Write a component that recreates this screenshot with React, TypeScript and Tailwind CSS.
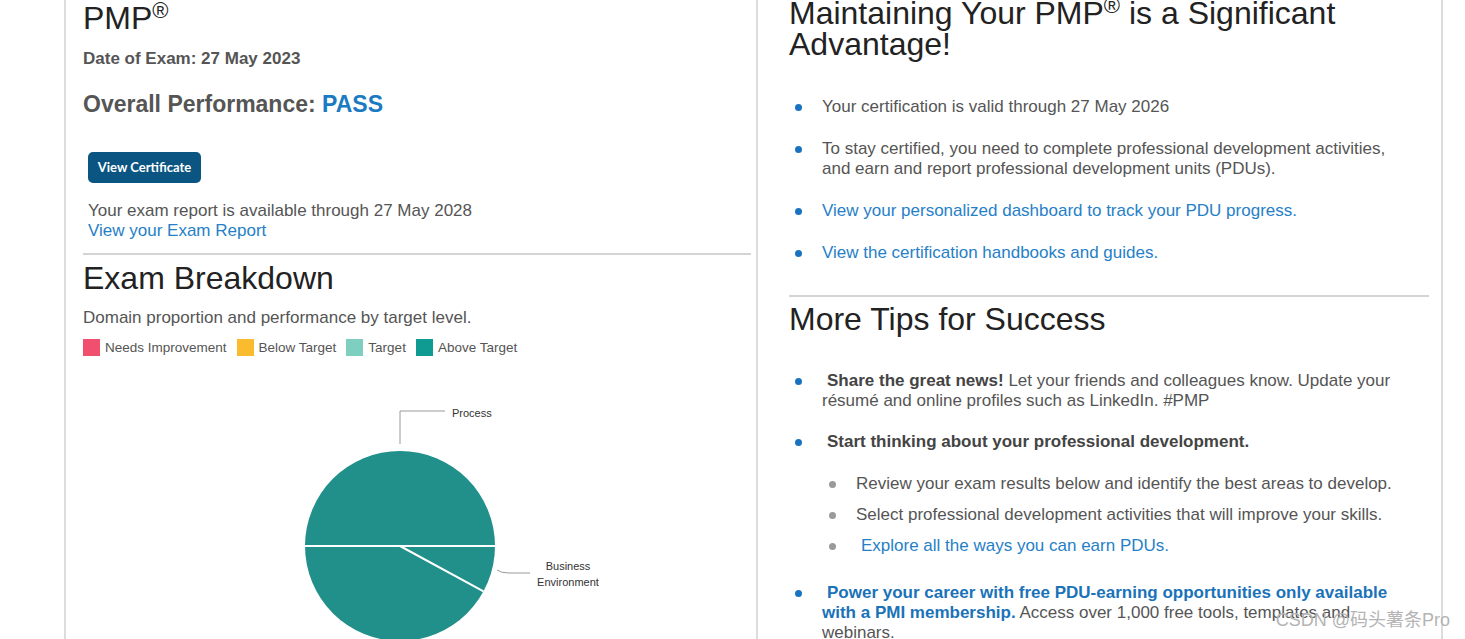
const Dot = ({ sub }: { sub?: boolean }) =>
  sub ? (
    <span className="mt-[7px] ml-[40px] mr-[20px] size-[7px] shrink-0 rounded-full bg-[#9a9a9a]" />
  ) : (
    <span className="mt-[7px] ml-[6px] mr-[20px] size-[7px] shrink-0 rounded-full bg-[#1a73c0]" />
  )

const Legend = ({ color, label }: { color: string; label: string }) => (
  <div className="flex items-center gap-[5px]">
    <span className={`size-[17px] ${color}`} />
    <span>{label}</span>
  </div>
)

const Pie = () => (
  <svg width="668" height="275" className="block" style={{ fontFamily: "Liberation Sans, Arial, sans-serif" }}>
    <circle cx="317" cy="180" r="95" fill="#218f8a" />
    <line x1="222" y1="180" x2="412" y2="180" stroke="#fff" strokeWidth="2" />
    <line x1="317" y1="180" x2="400.5" y2="225.3" stroke="#fff" strokeWidth="2" />
    <polyline points="317,78 317,45 362,45" fill="none" stroke="#9a9a9a" strokeWidth="1" />
    <text x="369" y="51" fontSize="11" fill="#333">Process</text>
    <path d="M414 204 Q418 207 426 207 L447 207" fill="none" stroke="#9a9a9a" strokeWidth="1" />
    <text x="485" y="204" fontSize="11" fill="#333" textAnchor="middle">Business</text>
    <text x="485" y="220" fontSize="11" fill="#333" textAnchor="middle">Environment</text>
  </svg>
)

export default function App() {
  return (
    <div className="relative h-[639px] w-[1465px] overflow-hidden bg-white font-['Liberation_Sans',Arial,sans-serif] text-[#555]">
      <div className="ml-[64px] flex h-full w-[1379px]">
        {/* left card */}
        <div className="w-[694px] shrink-0 border-x-2 border-[#dcdcdc] pl-[17px] pr-[5px]">
          <h1 className="mt-[1px] text-[32px] leading-[34px] text-[#222]">
            PMP<sup className="text-[22px]">®</sup>
          </h1>
          <p className="mt-[14px] text-[17px] font-bold leading-[20px]">Date of Exam: 27 May 2023</p>
          <p className="mt-[21px] text-[23px] font-bold leading-[28px]">
            Overall Performance: <span className="text-[#1a7ac2]">PASS</span>
          </p>
          <div className="ml-[5px]">
            <button className="mt-[34px] h-[31px] w-[113px] rounded-[5px] bg-[#0b5582] font-['Lato',sans-serif] text-[13px] font-bold text-white">
              View Certificate
            </button>
            <p className="mt-[18px] text-[17px] leading-[20px]">Your exam report is available through 27 May 2028</p>
            <p className="text-[17px] leading-[20px] text-[#2680c8]">View your Exam Report</p>
          </div>
          <div className="mt-[12px] h-[2px] bg-[#d4d4d4]" />
          <h2 className="mt-[6px] text-[32px] leading-[34px] text-[#222]">Exam Breakdown</h2>
          <p className="mt-[13px] text-[17px] leading-[20px]">Domain proportion and performance by target level.</p>
          <div className="mt-[11px] flex gap-[10px] text-[13.5px] leading-[17px]">
            <Legend color="bg-[#f0506e]" label="Needs Improvement" />
            <Legend color="bg-[#fbbb2f]" label="Below Target" />
            <Legend color="bg-[#7fcfc0]" label="Target" />
            <Legend color="bg-[#0f9a92]" label="Above Target" />
          </div>
          <div className="mt-[10px]">
            <Pie />
          </div>
        </div>

        {/* right card */}
        <div className="w-[685px] shrink-0 border-r-2 border-[#dcdcdc] pl-[31px] pr-[12px]">
          <h2 className="-mt-[2px] text-[32px] leading-[31px] text-[#222]">
            Maintaining Your PMP<sup className="text-[22px]">®</sup> is a Significant Advantage!
          </h2>
          <ul className="mt-[37px] flex flex-col gap-[22px] text-[17px] leading-[20px]">
            <li className="flex">
              <Dot />
              <span>Your certification is valid through 27 May 2026</span>
            </li>
            <li className="flex">
              <Dot />
              <span>
                To stay certified, you need to complete professional development activities,
                <br />
                and earn and report professional development units (PDUs).
              </span>
            </li>
            <li className="flex">
              <Dot />
              <span className="text-[#2680c8]">View your personalized dashboard to track your PDU progress.</span>
            </li>
            <li className="flex">
              <Dot />
              <span className="text-[#2680c8]">View the certification handbooks and guides.</span>
            </li>
          </ul>
          <div className="mt-[32px] h-[2px] bg-[#d4d4d4]" />
          <h2 className="mt-[5px] text-[32px] leading-[34px] text-[#222]">More Tips for Success</h2>
          <ul className="mt-[35px] flex flex-col text-[17px] leading-[20px]">
            <li className="flex">
              <Dot />
              <span>
                <b className="ml-[5px] text-[#444]">Share the great news!</b> Let your friends and colleagues know. Update your
                <br />
                résumé and online profiles such as LinkedIn. #PMP
              </span>
            </li>
            <li className="mt-[21px] flex">
              <Dot />
              <b className="ml-[5px] text-[#444]">Start thinking about your professional development.</b>
            </li>
            <li className="mt-[22px] flex">
              <Dot sub />
              <span>Review your exam results below and identify the best areas to develop.</span>
            </li>
            <li className="mt-[11px] flex">
              <Dot sub />
              <span>Select professional development activities that will improve your skills.</span>
            </li>
            <li className="mt-[11px] flex">
              <Dot sub />
              <span className="ml-[5px] text-[#2680c8]">Explore all the ways you can earn PDUs.</span>
            </li>
            <li className="mt-[27px] flex">
              <Dot />
              <span>
                <b className="ml-[5px] text-[#1a73b8]">Power your career with free PDU-earning opportunities only available</b>
                <br />
                <b className="text-[#1a73b8]">with a PMI membership.</b> Access over 1,000 free tools, templates and
                <br />
                webinars.
              </span>
            </li>
          </ul>
        </div>
      </div>
      <div className="absolute right-[15px] bottom-[5px] font-['Liberation_Sans','Noto_Sans_CJK_SC',sans-serif] text-[18px] text-[#b4b4b4]">
        CSDN @码头薯条Pro
      </div>
    </div>
  )
}
